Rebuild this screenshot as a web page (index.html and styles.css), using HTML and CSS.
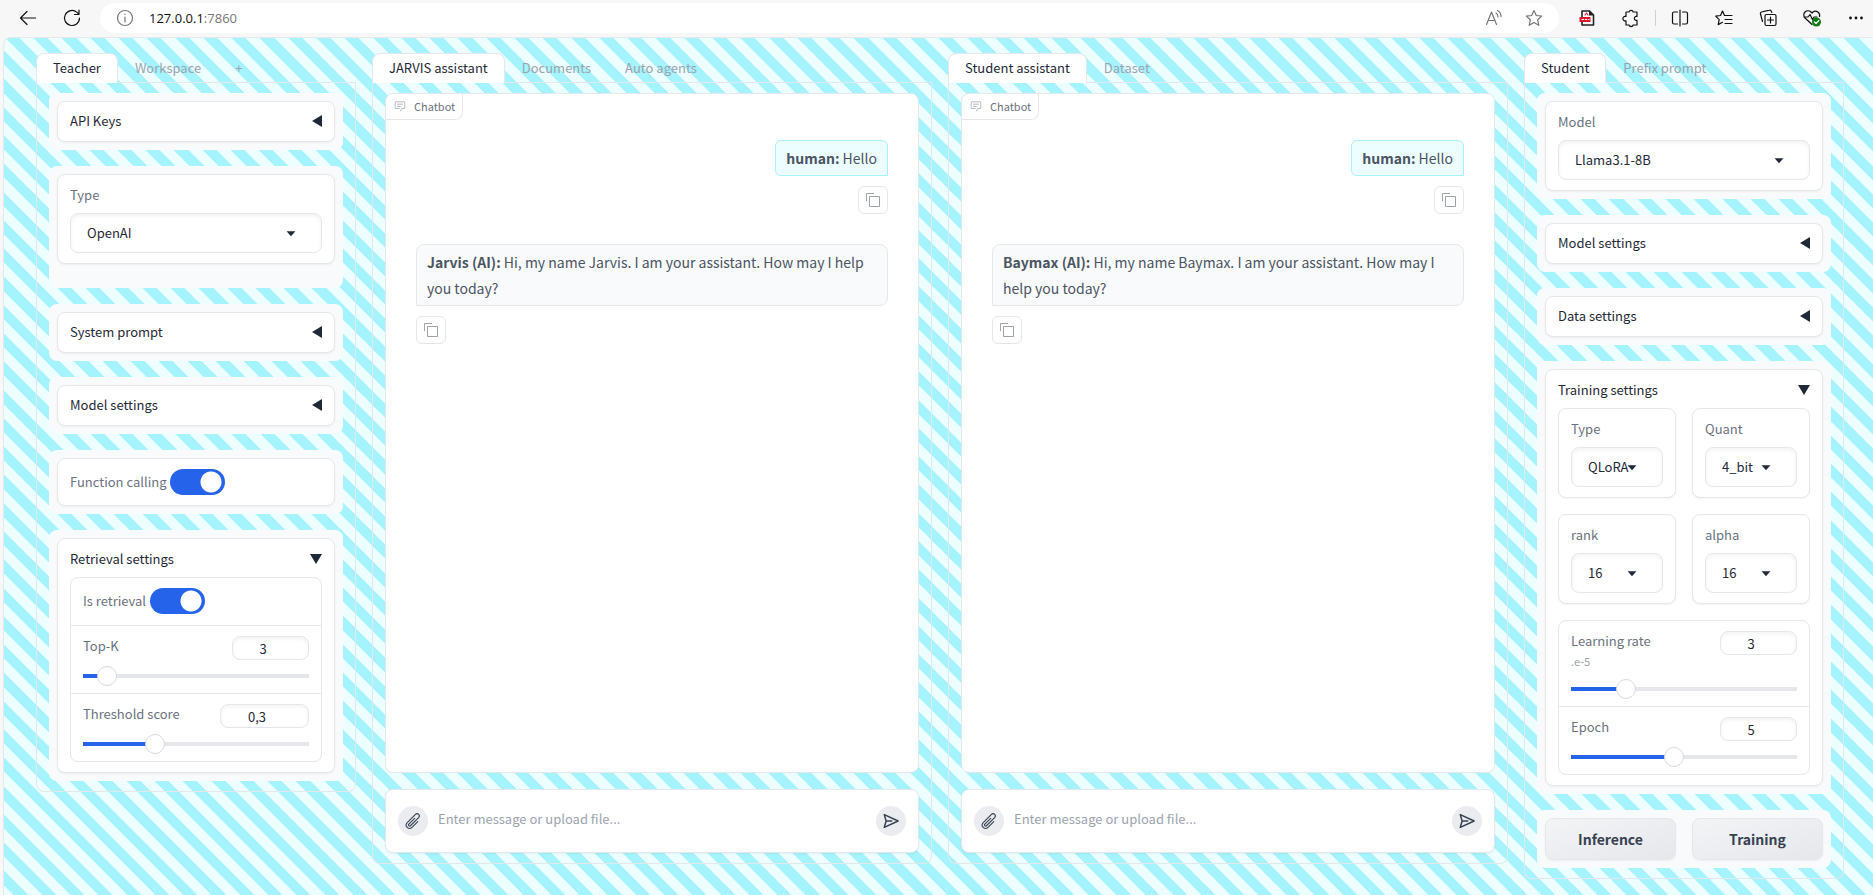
FILE: index.html
```html
<!DOCTYPE html>
<html lang="en">
<head>
<meta charset="utf-8">
<title>JARVIS assistant</title>
<link rel="stylesheet" href="styles.css">
</head>
<body>
<svg class="sprite" aria-hidden="true">
  <symbol id="copy" viewBox="0 0 32 32"><path fill="currentColor" d="M28 10v18H10V10h18m0-2H10a2 2 0 0 0-2 2v18a2 2 0 0 0 2 2h18a2 2 0 0 0 2-2V10a2 2 0 0 0-2-2Z"/><path fill="currentColor" d="M4 18H2V4a2 2 0 0 1 2-2h14v2H4Z"/></symbol>
  <symbol id="chat" viewBox="0 0 32 32"><path fill="currentColor" d="M17.74 30L16 29l4-7h6a2 2 0 0 0 2-2V8a2 2 0 0 0-2-2H6a2 2 0 0 0-2 2v12a2 2 0 0 0 2 2h9v2H6a4 4 0 0 1-4-4V8a4 4 0 0 1 4-4h20a4 4 0 0 1 4 4v12a4 4 0 0 1-4 4h-4.84Z"/><path fill="currentColor" d="M8 10h16v2H8zm0 6h10v2H8z"/></symbol>
  <symbol id="clip" viewBox="0 0 24 24"><path fill="none" stroke="currentColor" stroke-width="1.5" stroke-linecap="round" stroke-linejoin="round" d="m18.375 12.739-7.693 7.693a4.500 4.500 0 0 1-6.364-6.364l10.940-10.940A3 3 0 1 1 19.500 7.372L8.552 18.320m.009-.010-.010.010m5.699-9.941-7.810 7.810a1.500 1.500 0 0 0 2.112 2.130"/></symbol>
  <symbol id="send" viewBox="0 0 24 24"><path fill="none" stroke="currentColor" stroke-width="2" stroke-linecap="round" stroke-linejoin="round" d="M5.500 12 3 3.500 21.500 12 3 20.500zm0 0H13"/></symbol>
  <symbol id="caret" viewBox="0 0 18 18"><path fill="currentColor" d="M5 7.500h8L9 12z"/></symbol>
</svg>

<header class="toolbar">
  <button class="tool" aria-label="Back"><svg viewBox="0 0 20 20"><path d="M17.500 10H2.500M9 3.500 2.500 10 9 16.500"/></svg></button>
  <button class="tool" aria-label="Reload"><svg viewBox="0 0 20 20"><path d="M17.500 10a7.500 7.500 0 1 1-2.500-5.600l2 1.800M17 2v4.500h-4.500"/></svg></button>
  <div class="address">
    <svg class="info" viewBox="0 0 20 20"><circle cx="10" cy="10" r="7.500"/><path d="M10 9v5M10 6v.5"/></svg>
    <div class="url" role="textbox" aria-label="Address">127.0.0.1<span class="port">:7860</span></div>
    <button class="tool muted" aria-label="Read aloud"><svg viewBox="0 0 20 20"><path d="M2.500 16.500 7.500 4l5 12.500M4.300 12.500h6.500M12 5a5 5 0 0 1 2 4M13.500 2.500a7 7 0 0 1 3.500 6"/></svg></button>
    <button class="tool muted" aria-label="Add to favorites"><svg viewBox="0 0 20 20"><path d="m10 2.500 2.300 5 5.400.6-4 3.700 1.100 5.500L10 14.600l-4.800 2.700 1.100-5.500-4-3.700 5.400-.6z"/></svg></button>
  </div>
  <button class="tool" aria-label="PDF extension"><svg viewBox="0 0 20 20"><path fill="#fff" stroke="#222" stroke-width="1.600" d="M5 3h7.500L16.500 7v10H5z"/><path fill="#222" stroke="none" d="M12 2.500v5h5z"/><path stroke="#e0203a" d="M8 7l1.500-2L11 7"/><path stroke="none" fill="#e0142c" d="M2.500 9h11v5h-11z"/><path stroke="#fff" stroke-dasharray="1.500 1.800" d="M5 11.500h7"/></svg></button>
  <button class="tool" aria-label="Extensions"><svg viewBox="0 0 20 20"><path d="M5 4h3a2.200 2.200 0 0 1 4.200 0H16v4.500a2 2 0 1 0 0 3.800V17h-3.800a2.200 2.200 0 0 1-4.200 0H5v-4.200a2.300 2.300 0 1 1 0-4.300z"/></svg></button>
  <span class="separator"></span>
  <button class="tool" aria-label="Split screen"><svg viewBox="0 0 20 20"><path d="M10 2v16M7.500 4H4a1.500 1.500 0 0 0-1.500 1.500v9A1.500 1.500 0 0 0 4 16h3.500M12.500 4H16a1.500 1.500 0 0 1 1.500 1.500v9A1.500 1.500 0 0 1 16 16h-3.500"/></svg></button>
  <button class="tool" aria-label="Favorites"><svg viewBox="0 0 20 20"><path d="M10.500 7.500 8.500 3l-2 4.500-4.800.6 3.500 3.500-1 5 4.300-2.300M10.500 7.500H18M11 11.500h7M11 15.500h7"/></svg></button>
  <button class="tool" aria-label="Collections"><svg viewBox="0 0 20 20"><path d="M8.500 6.500h8A1.500 1.500 0 0 1 18 8v8a1.500 1.500 0 0 1-1.500 1.500h-8A1.500 1.500 0 0 1 7 16V8a1.500 1.500 0 0 1 1.500-1.500zM12.500 9v6M9.500 12h6M4.500 13.500 2.500 6a1.500 1.500 0 0 1 1-2l8-1.800a1.500 1.500 0 0 1 1.800 1l.5 1.300"/></svg></button>
  <button class="tool" aria-label="Browser essentials"><svg viewBox="0 0 20 20"><path d="M10 16.500 3 10a4.200 4.200 0 0 1 6-6l1 1 1-1a4.200 4.200 0 0 1 6.500 4.500M2 9h4l2-2.500 2.500 5L12 9h3"/><circle cx="14.500" cy="14" r="4.500" fill="#107c10" stroke="none"/><path stroke="#fff" d="m12.500 14 1.500 1.500 2.800-3"/></svg></button>
  <button class="tool" aria-label="More"><svg viewBox="0 0 20 20"><g fill="#111" stroke="none"><circle cx="4.500" cy="10" r="1.400"/><circle cx="10" cy="10" r="1.400"/><circle cx="15.500" cy="10" r="1.400"/></g></svg></button>
</header>

<main class="page">
  <section class="panel side">
    <nav class="tabs"><button class="tab active">Teacher</button><button class="tab">Workspace</button><button class="tab">+</button></nav>
    <div class="pane">
      <div class="group"><button class="block accordion">API Keys<span class="arrow"></span></button></div>
      <div class="group spare">
        <div class="block field"><label for="provider">Type</label>
          <div class="select"><select id="provider"><option>OpenAI</option></select><svg><use href="#caret"/></svg></div></div>
      </div>
      <div class="group"><button class="block accordion">System prompt<span class="arrow"></span></button></div>
      <div class="group"><button class="block accordion">Model settings<span class="arrow"></span></button></div>
      <div class="group"><div class="block"><label class="switch">Function calling<input type="checkbox" checked></label></div></div>
      <div class="group">
        <div class="block">
          <button class="accordion open">Retrieval settings<span class="arrow"></span></button>
          <div class="form">
            <div class="row toggle"><label class="switch">Is retrieval<input type="checkbox" checked></label></div>
            <div class="row">
              <div class="head"><label for="topk">Top-K</label><input class="number" id="topk" value="3"></div>
              <input type="range" aria-label="Top-K" min="0" max="100" value="7" style="--fill:7%">
            </div>
            <div class="row">
              <div class="head"><label for="score">Threshold score</label><input class="number wide" id="score" value="0,3"></div>
              <input type="range" aria-label="Threshold score" min="0" max="100" value="30" style="--fill:30%">
            </div>
          </div>
        </div>
      </div>
    </div>
  </section>

  <section class="panel">
    <nav class="tabs"><button class="tab active">JARVIS assistant</button><button class="tab">Documents</button><button class="tab">Auto agents</button></nav>
    <div class="pane">
      <div class="chat">
        <div class="badge"><svg><use href="#chat"/></svg>Chatbot</div>
        <div class="messages">
          <p class="bubble user"><strong>human:</strong> Hello</p>
          <button class="copy end" aria-label="Copy message"><svg><use href="#copy"/></svg></button>
          <p class="bubble bot"><strong>Jarvis (AI):</strong> Hi, my name Jarvis. I am your assistant. How may I help you today?</p>
          <button class="copy" aria-label="Copy message"><svg><use href="#copy"/></svg></button>
        </div>
      </div>
      <form class="composer">
        <button type="button" class="round" aria-label="Attach file"><svg><use href="#clip"/></svg></button>
        <input class="message" aria-label="Message" placeholder="Enter message or upload file...">
        <button type="button" class="round" aria-label="Send"><svg><use href="#send"/></svg></button>
      </form>
    </div>
  </section>

  <section class="panel">
    <nav class="tabs"><button class="tab active">Student assistant</button><button class="tab">Dataset</button></nav>
    <div class="pane">
      <div class="chat">
        <div class="badge"><svg><use href="#chat"/></svg>Chatbot</div>
        <div class="messages">
          <p class="bubble user"><strong>human:</strong> Hello</p>
          <button class="copy end" aria-label="Copy message"><svg><use href="#copy"/></svg></button>
          <p class="bubble bot"><strong>Baymax (AI):</strong> Hi, my name Baymax. I am your assistant. How may I help you today?</p>
          <button class="copy" aria-label="Copy message"><svg><use href="#copy"/></svg></button>
        </div>
      </div>
      <form class="composer">
        <button type="button" class="round" aria-label="Attach file"><svg><use href="#clip"/></svg></button>
        <input class="message" aria-label="Message" placeholder="Enter message or upload file...">
        <button type="button" class="round" aria-label="Send"><svg><use href="#send"/></svg></button>
      </form>
    </div>
  </section>

  <section class="panel side">
    <nav class="tabs"><button class="tab active">Student</button><button class="tab">Prefix prompt</button></nav>
    <div class="pane">
      <div class="group">
        <div class="block field"><label for="model">Model</label>
          <div class="select"><select id="model"><option>Llama3.1-8B</option></select><svg><use href="#caret"/></svg></div></div>
      </div>
      <div class="group"><button class="block accordion">Model settings<span class="arrow"></span></button></div>
      <div class="group"><button class="block accordion">Data settings<span class="arrow"></span></button></div>
      <div class="group">
        <div class="block">
          <button class="accordion open">Training settings<span class="arrow"></span></button>
          <div class="grid">
            <div class="block field"><label for="ttype">Type</label>
              <div class="select"><select id="ttype"><option>QLoRA</option></select><svg><use href="#caret"/></svg></div></div>
            <div class="block field"><label for="quant">Quant</label>
              <div class="select"><select id="quant"><option>4_bit</option></select><svg><use href="#caret"/></svg></div></div>
            <div class="block field"><label for="rank">rank</label>
              <div class="select"><select id="rank"><option>16</option></select><svg><use href="#caret"/></svg></div></div>
            <div class="block field"><label for="alpha">alpha</label>
              <div class="select"><select id="alpha"><option>16</option></select><svg><use href="#caret"/></svg></div></div>
          </div>
          <div class="form">
            <div class="row">
              <div class="head"><label for="rate">Learning rate<small>.e-5</small></label><input class="number" id="rate" value="3"></div>
              <input type="range" aria-label="Learning rate" min="0" max="100" value="22" style="--fill:22%">
            </div>
            <div class="row">
              <div class="head"><label for="epoch">Epoch</label><input class="number" id="epoch" value="5"></div>
              <input type="range" aria-label="Epoch" min="0" max="100" value="45" style="--fill:45%">
            </div>
          </div>
        </div>
      </div>
      <div class="group actions"><button class="action">Inference</button><button class="action">Training</button></div>
    </div>
  </section>
</main>
</body>
</html>
```
FILE: styles.css
```css
:root {
  --line: #e5e7eb;
  --soft: #f9fafb;
  --label: #6b7280;
  --ink: #1f2937;
  --blue: #2563eb;
}
* { box-sizing: border-box; }
body {
  margin: 0;
  min-height: 100vh;
  display: flex;
  flex-direction: column;
  background: #f7f7f7;
  color: var(--ink);
  font: 13px/20px "Noto Sans CJK SC", "Noto Sans", sans-serif;
}
button, input, select { font: inherit; color: inherit; margin: 0; }
button { border: 0; padding: 0; background: none; cursor: pointer; }
.sprite { display: none; }

/* Browser bar */
.toolbar { display: flex; align-items: center; height: 36px; padding: 0 7px 0 18px; gap: 24px; }
.tool { display: flex; flex: none; width: 20px; height: 20px; }
.tool svg, .info { width: 20px; height: 20px; fill: none; stroke: #111; stroke-width: 1.2; stroke-linecap: round; stroke-linejoin: round; }
.tool.muted svg, .info { stroke: #767676; }
.address { display: flex; flex: 1; align-items: center; gap: 20px; height: 30px; padding: 0 15px; margin: 0 -6px; background: #fff; border-radius: 15px; }
.url { flex: 1; margin-left: -6px; font-family: "Open Sans", sans-serif; color: #111; }
.port { color: #767676; }
.separator { width: 1px; height: 16px; margin: 0 -10px; background: #d0d0d0; }

/* Page */
.page {
  flex: 1;
  display: flex;
  align-items: flex-start;
  gap: 16px;
  margin: 1px 0 0 3px;
  padding: 15px 29px 12px 32px;
  border: 1px solid var(--line);
  border-width: 1px 0 0 1px;
  border-radius: 8px 0 0 0;
  background: repeating-linear-gradient(45deg, #a5f3fc 7px, #a5f3fc 17px, #ecfeff 17px, #ecfeff 27px);
}
.panel { flex: 1; min-width: 0; }
.panel.side { flex: 0 0 320px; }
.tabs { display: flex; border-bottom: 1px solid var(--line); }
.tab { height: 30px; margin-bottom: -1px; padding: 0 16px 2px; border: 1px solid transparent; border-bottom: 0; border-radius: 8px 8px 0 0; color: #9ca3af; }
.tab.active { background: #fff; border-color: var(--line); color: var(--ink); }
.pane { display: flex; flex-direction: column; gap: 16px; padding: 10px 12px; border: 1px solid var(--line); border-top: 0; border-radius: 0 0 8px 8px; }
.group { padding: 8px; border-radius: 8px; background: var(--soft); }
.group.spare { padding-bottom: 24px; }
.block { width: 100%; padding: 10px 12px; border: 1px solid var(--line); border-radius: 8px; background: #fff; box-shadow: 0 1px 2px rgba(0, 0, 0, .05); }
.accordion { display: flex; align-items: center; justify-content: space-between; width: 100%; text-align: left; }
.block.accordion { padding: 9px 12px 10px; }
.arrow { width: 0; height: 0; border: 6px solid transparent; border-right: 10px solid var(--ink); border-left: 0; }
.open .arrow { border: 6px solid transparent; border-top: 10px solid var(--ink); border-bottom: 0; }
label { color: var(--label); }

.field { display: flex; flex-direction: column; gap: 8px; }
.select { display: grid; align-items: center; }
.select > * { grid-area: 1 / 1; }
.select select { width: 100%; height: 40px; padding: 0 16px 1px; border: 1px solid var(--line); border-radius: 8px; background: #fff; appearance: none; box-shadow: inset 0 2px 4px rgba(0, 0, 0, .05); }
.select svg { justify-self: end; width: 20px; height: 20px; margin-right: 21px; pointer-events: none; }

.switch { display: flex; align-items: center; gap: 4px; }
.switch input { width: 55px; height: 26px; appearance: none; border-radius: 13px; background: radial-gradient(circle at 41px 13px, #fff 10px, var(--blue) 11px); }

.form { margin-top: 8px; border: 1px solid var(--line); border-radius: 8px; background: #fff; }
.row { padding: 10px 12px 7px; }
.row.toggle { padding-bottom: 11px; }
.row + .row { border-top: 1px solid var(--line); }
.head { display: flex; align-items: flex-start; justify-content: space-between; }
.head small { display: block; padding-bottom: 2px; font-size: 11px; color: #9ca3af; }
.number { width: 77px; height: 24px; padding: 0 15px 0 0; border: 1px solid var(--line); border-radius: 8px; text-align: center; background: #fff; box-shadow: inset 0 2px 4px rgba(0, 0, 0, .05); }
.number.wide { width: 89px; }
input[type="range"] { display: block; width: 100%; height: 20px; margin-top: 6px; appearance: none; background: linear-gradient(to right, var(--blue) var(--fill), var(--line) var(--fill)) center / 100% 4px no-repeat; }
input[type="range"]::-webkit-slider-thumb { appearance: none; width: 20px; height: 20px; border: 1px solid #d8dade; border-radius: 50%; background: #fff; }

.grid { display: grid; grid-template-columns: 1fr 1fr; gap: 16px; margin: 8px 0 16px; }
.actions { display: flex; gap: 16px; }
.action { flex: 1; height: 42px; border: 1px solid var(--line); border-radius: 8px; background: linear-gradient(to bottom right, #f3f4f6, #e5e7eb); color: #374151; font-size: 14px; font-weight: 700; box-shadow: 0 1px 2px rgba(0, 0, 0, .05); }

/* Chat */
.chat { height: 680px; border: 1px solid var(--line); border-radius: 8px; background: #fff; overflow: hidden; }
.badge { display: flex; align-items: center; gap: 8px; width: max-content; height: 26px; padding: 0 7px 2px 8px; border: 1px solid var(--line); border-width: 0 1px 1px 0; border-radius: 0 0 8px 0; font-size: 11px; color: var(--label); }
.badge svg { width: 12px; height: 12px; color: #9ca3af; }
.messages { display: flex; flex-direction: column; align-items: flex-start; padding: 20px 30px; }
.bubble { margin: 0; padding: 4px 10px; border: 1px solid var(--line); border-radius: 8px; font-size: 14px; line-height: 26px; color: #4b5563; }
.bot { width: 100%; margin-top: 30px; border-bottom-left-radius: 0; background: var(--soft); }
.user { align-self: flex-end; border-color: #a5f3fc; border-radius: 6px; border-bottom-right-radius: 0; background: #ecfeff; }
.copy { display: grid; place-items: center; width: 30px; height: 28px; margin-top: 10px; border: 1px solid var(--line); border-radius: 6px; color: #9ca3af; }
.copy svg { width: 16px; height: 16px; }
.end { align-self: flex-end; }
.composer { display: flex; align-items: center; gap: 10px; height: 64px; margin: 0; padding: 0 12px; border: 1px solid var(--line); border-radius: 8px; background: #fff; box-shadow: 0 1px 2px rgba(0, 0, 0, .05); }
.message { flex: 1; min-width: 0; height: 40px; padding: 0 0 6px; border: 0; background: none; }
.message::placeholder { color: #9ca3af; }
.round { display: grid; place-items: center; width: 30px; height: 30px; border-radius: 50%; background: #ebecf0; color: #374151; }
.round svg { width: 18px; height: 18px; }
```
